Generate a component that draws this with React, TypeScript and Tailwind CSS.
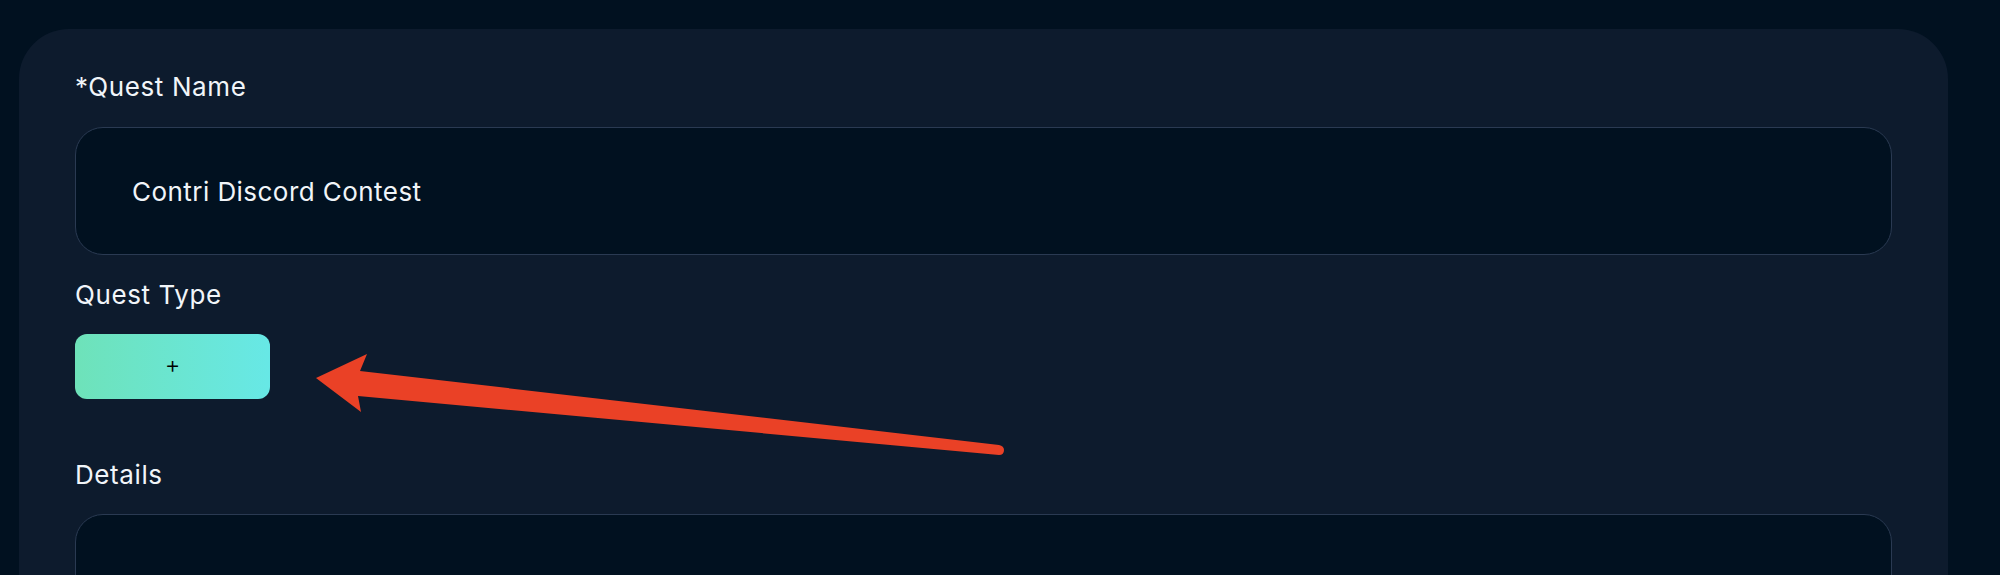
import React from 'react';

const font = { fontFamily: 'Inter, "Noto Sans", sans-serif' };

const Label: React.FC<{ children: React.ReactNode }> = ({ children }) => (
  <div className="text-[26px] leading-[26px] tracking-[0.6px] text-[#f1f5f9]">{children}</div>
);

const App: React.FC = () => {
  return (
    <div className="relative h-[575px] overflow-hidden bg-[#011120] pt-[29px] pl-[19px] pr-[52px]" style={font}>
      <div className="h-[600px] rounded-t-[50px] bg-[#0d1b2d] px-[56px] pt-[45px]">
        <Label>*Quest Name</Label>
        <div className="mt-[27px] flex h-[128px] items-center rounded-[28px] border border-[#2a3a52] bg-[#011120] pl-[56px]">
          <span className="text-[26px] tracking-[0.45px] text-[#f1f5f9]">Contri Discord Contest</span>
        </div>

        <div className="mt-[27px]">
          <Label>Quest Type</Label>
        </div>
        <button className="mt-[26px] flex h-[65px] w-[195px] items-center justify-center rounded-[12px] bg-gradient-to-r from-[#6ee2b9] to-[#67e8e6] pb-[4px] text-[24px] leading-none font-light text-black">
          +
        </button>

        <div className="mt-[63px]">
          <Label>Details</Label>
        </div>
        <div className="mt-[26px] h-[220px] rounded-[28px] border border-[#2a3a52] bg-[#011120]" />
      </div>

      {/* annotation arrow */}
      <svg className="pointer-events-none absolute left-0 top-0" width="2000" height="575" viewBox="0 0 2000 575">
        <path
          d="M316 378 L367 354 L360 371 L999 445 Q1004 446 1004 450 Q1004 455 999 455 L358 396 L361 412 Z"
          fill="#ea4126"
        />
      </svg>
    </div>
  );
};

export default App;
